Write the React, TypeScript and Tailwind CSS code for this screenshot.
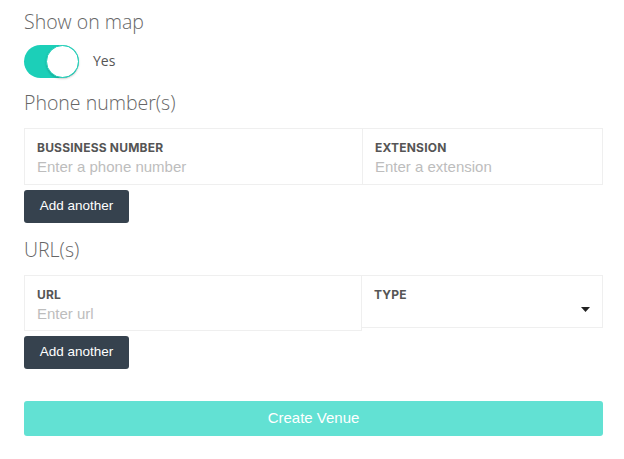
import { useState } from "react";

function Field(props: { label: string; placeholder?: string; select?: boolean; className?: string }) {
  return (
    <div className={"flex flex-col px-3 pt-[11px] bg-white " + (props.className ?? "")}>
      <label className="text-[12px] font-bold uppercase tracking-[0.2px] text-[#555] font-['Inter',sans-serif] leading-[16px]">
        {props.label}
      </label>
      {props.select ? (
        <div className="flex justify-end items-start h-[22px]">
          <svg width="9" height="5" viewBox="0 0 9 5" className="mt-[4px]">
            <path d="M0 0h9L4.5 5z" fill="#222" />
          </svg>
        </div>
      ) : (
        <input
          placeholder={props.placeholder}
          className="text-[15px] leading-[22px] outline-none placeholder:text-[#bdbdbd] font-['Liberation_Sans',Arial,sans-serif]"
        />
      )}
    </div>
  );
}

function AddButton() {
  return (
    <button className="mt-[5px] w-[105px] h-[33px] rounded-[3px] bg-[#36424e] text-white text-[13.5px] font-['Liberation_Sans',Arial,sans-serif]">
      Add another
    </button>
  );
}

export default function App() {
  const [on, setOn] = useState(true);

  return (
    <div className="w-[624px] h-[459px] bg-white pl-6 pr-[21px] pt-[9px] font-['Open_Sans',sans-serif]">
      <h2 className="text-[19.5px] font-light text-[#666] leading-[26px]">Show on map</h2>

      <div className="flex items-center mt-[10px] h-[33px]">
        <button
          onClick={() => setOn(!on)}
          className={"relative w-[55px] h-[33px] rounded-full " + (on ? "bg-[#1ccfb8]" : "bg-gray-300")}
        >
          <span
            className={
              "absolute top-0 w-[33px] h-[33px] rounded-full bg-white border border-[#1ccfb8] shadow-[0_1px_2px_rgba(0,0,0,0.2)] " +
              (on ? "right-0" : "left-0")
            }
          />
        </button>
        <span className="ml-[14px] -mt-[3px] text-[14px] text-[#555]">Yes</span>
      </div>

      <h2 className="mt-[12px] text-[19.5px] font-light text-[#666] leading-[26px]">Phone number(s)</h2>

      <div className="mt-[12px] flex h-[57px] border border-[#efefef]">
        <Field label="Bussiness number" placeholder="Enter a phone number" className="w-[338px] border-r border-[#efefef]" />
        <Field label="Extension" placeholder="Enter a extension" className="flex-1" />
      </div>
      <AddButton />

      <h2 className="mt-[14px] text-[19.5px] font-light text-[#666] leading-[26px]">URL(s)</h2>

      <div className="mt-[12px] flex items-start">
        <Field label="Url" placeholder="Enter url" className="w-[338px] h-[56px] border border-[#efefef]" />
        <Field label="Type" select className="flex-1 h-[53px] border border-l-0 border-[#efefef]" />
      </div>
      <AddButton />

      <button className="mt-[32px] w-full h-[35px] rounded-[3px] bg-[#62e1d3] text-white text-[15px] font-['Liberation_Sans',Arial,sans-serif]">
        Create Venue
      </button>
    </div>
  );
}
